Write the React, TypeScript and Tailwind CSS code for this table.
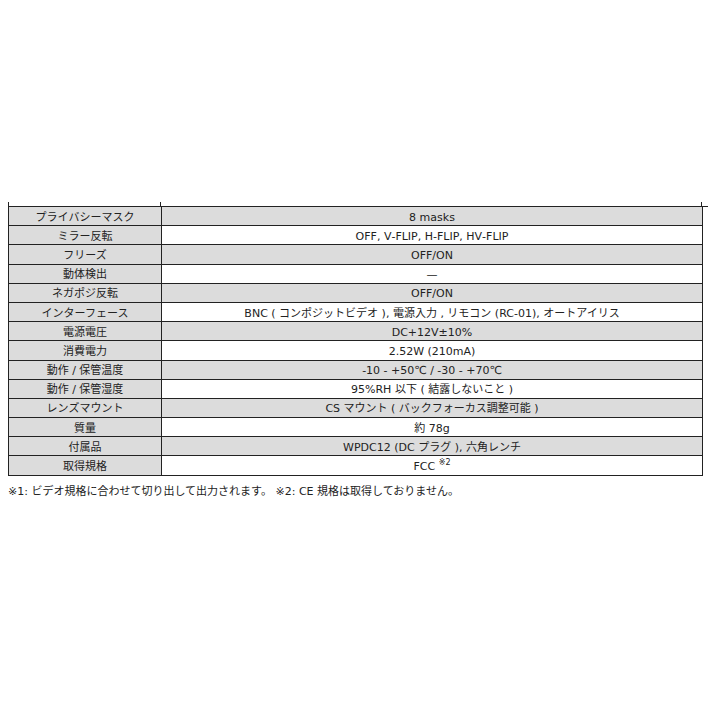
import React from 'react';

const rows: [string, React.ReactNode][] = [
  ['プライバシーマスク', '8 masks'],
  ['ミラー反転', 'OFF, V‐FLIP, H‐FLIP, HV‐FLIP'],
  ['フリーズ', 'OFF/ON'],
  ['動体検出', '—'],
  ['ネガポジ反転', 'OFF/ON'],
  ['インターフェース', 'BNC ( コンポジットビデオ ), 電源入力 , リモコン (RC‐01), オートアイリス'],
  ['電源電圧', 'DC+12V±10%'],
  ['消費電力', '2.52W (210mA)'],
  ['動作 / 保管温度', '‐10 ‐ +50℃ / ‐30 ‐ +70℃'],
  ['動作 / 保管湿度', '95%RH 以下 ( 結露しないこと )'],
  ['レンズマウント', 'CS マウント ( バックフォーカス調整可能 )'],
  ['質量', '約 78g'],
  ['付属品', 'WPDC12 (DC プラグ ), 六角レンチ'],
  [
    '取得規格',
    <>
      FCC&nbsp;<sup className="text-[8px] align-[4px]">※2</sup>
    </>,
  ],
];

const App = () => {
  return (
    <div
      className="w-[708px] h-[708px] bg-white text-[#222] text-[11px] leading-none"
      style={{ fontFamily: '"DejaVu Sans", "Noto Sans CJK JP", sans-serif' }}
    >
      <div className="pt-[202px] pl-[8px]">
        {/* cut-off row above */}
        <div className="grid grid-cols-[153px_541px] h-[4px]">
          <div className="border-l border-r border-[#222]" />
          <div className="border-r border-[#222]" />
        </div>

        {/* Spec table */}
        <div className="grid grid-cols-[153px_541px] border-t border-l border-[#222]">
          {rows.map(([label, value], i) => (
            <React.Fragment key={i}>
              <div className="h-[19.2px] pt-[2px] flex items-center justify-center bg-[#dcdcdc] border-r border-b border-[#222]">
                {label}
              </div>
              <div
                className={
                  'h-[19.2px] pt-[2px] flex items-center justify-center border-r border-b border-[#222] ' +
                  (i % 2 === 0 ? 'bg-[#dcdcdc]' : 'bg-white')
                }
              >
                {value}
              </div>
            </React.Fragment>
          ))}
        </div>

        <p className="mt-[10px]">
          ※1: ビデオ規格に合わせて切り出して出力されます。 ※2: CE 規格は取得しておりません。
        </p>
      </div>
    </div>
  );
};

export default App;
